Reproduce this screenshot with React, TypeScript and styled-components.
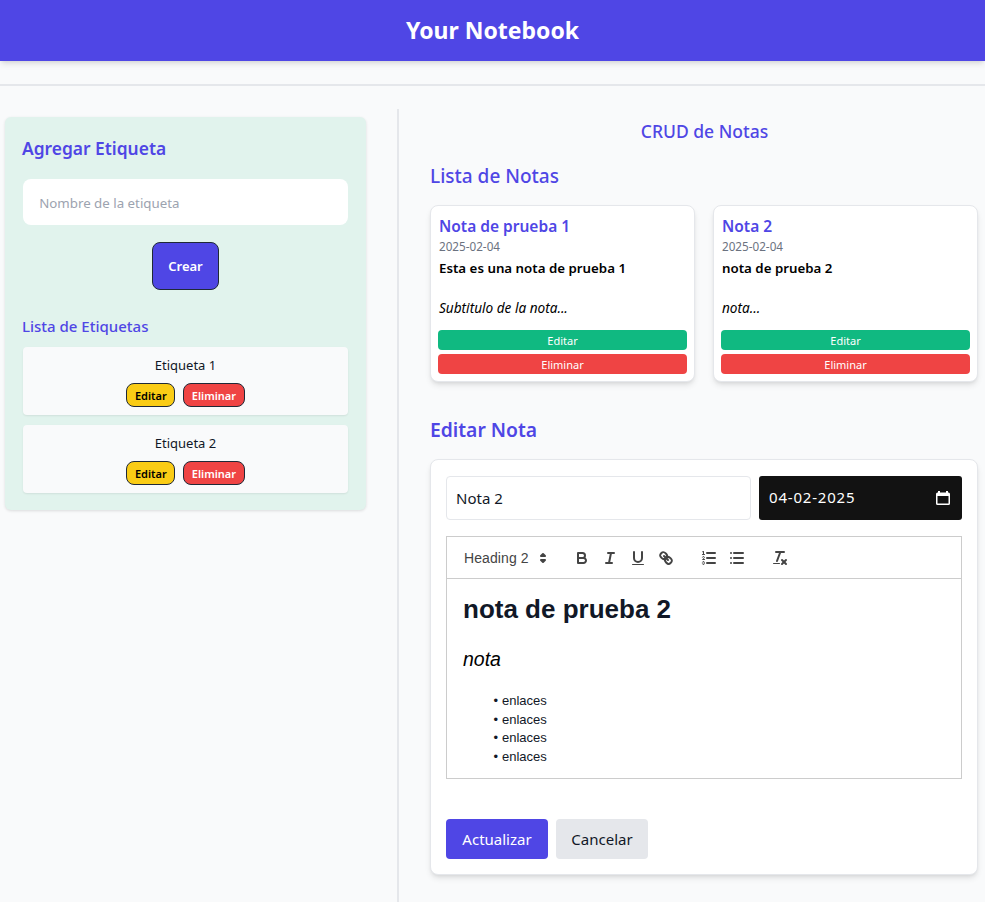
import React from 'react';
import styled, { createGlobalStyle } from 'styled-components';

const GlobalStyle = createGlobalStyle`
    * {
        box-sizing: border-box;
    }
    html, body {
        margin: 0;
        padding: 0;
        overflow: hidden;
    }
    body {
        background: #f9fafb;
        color: #111827;
        font-family: "Noto Sans", "Open Sans", sans-serif;
    }
`;

const tags = ['Etiqueta 1', 'Etiqueta 2'];

const notes = [
    { title: 'Nota de prueba 1', date: '2025-02-04', body: 'Esta es una nota de prueba 1', sub: 'Subtitulo de la nota...' },
    { title: 'Nota 2', date: '2025-02-04', body: 'nota de prueba 2', sub: 'nota...' },
];

const QuillIcon: React.FC<{ children: React.ReactNode }> = ({ children }) => (
    <ToolIcon viewBox="0 0 18 18">{children}</ToolIcon>
);

const App: React.FC = () => {
    return (
        <>
            <GlobalStyle />
            <Header>
                <Brand>Your Notebook</Brand>
            </Header>
            <Divider />
            <Main>
                <Aside>
                    <TagPanel>
                        <PanelTitle>Agregar Etiqueta</PanelTitle>
                        <TagInput placeholder="Nombre de la etiqueta" />
                        <CreateButton>Crear</CreateButton>
                        <TagListTitle>Lista de Etiquetas</TagListTitle>
                        <TagList>
                            {tags.map(tag => (
                                <TagItem key={tag}>
                                    <TagName>{tag}</TagName>
                                    <TagActions>
                                        <TagButton variant="edit">Editar</TagButton>
                                        <TagButton variant="delete">Eliminar</TagButton>
                                    </TagActions>
                                </TagItem>
                            ))}
                        </TagList>
                    </TagPanel>
                </Aside>
                <Content>
                    <PageTitle>CRUD de Notas</PageTitle>
                    <SectionTitle>Lista de Notas</SectionTitle>
                    <NoteGrid>
                        {notes.map(note => (
                            <NoteCard key={note.title}>
                                <NoteText>
                                    <NoteTitle>{note.title}</NoteTitle>
                                    <NoteDate>{note.date}</NoteDate>
                                    <NoteBody>{note.body}</NoteBody>
                                    <NoteSub>{note.sub}</NoteSub>
                                </NoteText>
                                <NoteButton variant="edit">Editar</NoteButton>
                                <NoteButton variant="delete">Eliminar</NoteButton>
                            </NoteCard>
                        ))}
                    </NoteGrid>
                    <EditTitle>Editar Nota</EditTitle>
                    <EditForm>
                        <FieldRow>
                            <TitleInput defaultValue="Nota 2" />
                            <DateField>
                                <DateText>04-02-2025</DateText>
                                <svg width="16" height="16" viewBox="0 0 16 16" fill="#fff">
                                    <path d="M3 1h2v1.5h6V1h2v1.5h.5A1.5 1.5 0 0 1 15 4v9.5a1.5 1.5 0 0 1-1.5 1.5h-11A1.5 1.5 0 0 1 1 13.5V4a1.5 1.5 0 0 1 1.5-1.5H3V1Zm-.5 5v7.5h11V6h-11Z" />
                                </svg>
                            </DateField>
                        </FieldRow>
                        <Toolbar>
                            <HeadingPicker>
                                Heading 2
                                <PickerArrows viewBox="0 0 18 18">
                                    <polygon points="7 11 9 13 11 11 7 11" />
                                    <polygon points="7 7 9 5 11 7 7 7" />
                                </PickerArrows>
                            </HeadingPicker>
                            <ToolGroup>
                                <QuillIcon>
                                    <path d="M5,4H9.5A2.5,2.5,0,0,1,12,6.5v0A2.5,2.5,0,0,1,9.5,9H5A0,0,0,0,1,5,9V4A0,0,0,0,1,5,4Z" />
                                    <path d="M5,9h5.5A2.5,2.5,0,0,1,13,11.5v0A2.5,2.5,0,0,1,10.5,14H5a0,0,0,0,1,0,0V9A0,0,0,0,1,5,9Z" />
                                </QuillIcon>
                                <QuillIcon>
                                    <line x1="7" x2="13" y1="4" y2="4" />
                                    <line x1="5" x2="11" y1="14" y2="14" />
                                    <line x1="8" x2="10" y1="14" y2="4" />
                                </QuillIcon>
                                <QuillIcon>
                                    <path d="M5,3V9a4.012,4.012,0,0,0,4,4H9a4.012,4.012,0,0,0,4-4V3" />
                                    <rect x="3" y="15" width="12" height="1" rx="0.5" ry="0.5" fill="#444" stroke="none" />
                                </QuillIcon>
                                <QuillIcon>
                                    <line x1="7" x2="11" y1="7" y2="11" />
                                    <path d="M8.9,4.577a3.476,3.476,0,0,1,.36,4.679A3.476,3.476,0,0,1,4.577,8.9C3.185,7.5,2.035,6.4,4.217,4.217S7.5,3.185,8.9,4.577Z" />
                                    <path d="M13.423,9.1a3.476,3.476,0,0,0-4.679-.36,3.476,3.476,0,0,0,.36,4.679c1.392,1.392,2.5,2.542,4.679.36S14.815,10.5,13.423,9.1Z" />
                                </QuillIcon>
                            </ToolGroup>
                            <ToolGroup>
                                <QuillIcon>
                                    <line x1="7" x2="15" y1="4" y2="4" />
                                    <line x1="7" x2="15" y1="9" y2="9" />
                                    <line x1="7" x2="15" y1="14" y2="14" />
                                    <line x1="2.5" x2="4.5" y1="5.5" y2="5.5" strokeWidth="1" />
                                    <path d="M3.5,6A0.5,0.5,0,0,1,3,5.5V3.085l-0.276.138A0.5,0.5,0,0,1,2.053,3c-0.124-.247-0.023-0.324.224-0.447l1-.5A0.5,0.5,0,0,1,4,2.5v3A0.5,0.5,0,0,1,3.5,6Z" fill="#444" stroke="none" />
                                    <path d="M4.5,10.5h-2c0-.234,1.85-1.076,1.85-2.234A0.959,0.959,0,0,0,2.5,8.156" strokeWidth="1" />
                                    <path d="M2.5,14.846a0.959,0.959,0,0,0,1.85-.109A0.7,0.7,0,0,0,3.75,14a0.688,0.688,0,0,0,.6-0.736,0.959,0.959,0,0,0-1.85-.109" strokeWidth="1" />
                                </QuillIcon>
                                <QuillIcon>
                                    <line x1="6" x2="15" y1="4" y2="4" />
                                    <line x1="6" x2="15" y1="9" y2="9" />
                                    <line x1="6" x2="15" y1="14" y2="14" />
                                    <line x1="3" x2="3" y1="4" y2="4" />
                                    <line x1="3" x2="3" y1="9" y2="9" />
                                    <line x1="3" x2="3" y1="14" y2="14" />
                                </QuillIcon>
                            </ToolGroup>
                            <ToolGroup>
                                <QuillIcon>
                                    <line x1="5" x2="13" y1="3" y2="3" />
                                    <line x1="6" x2="9.35" y1="12" y2="3" />
                                    <line x1="11" x2="15" y1="11" y2="15" />
                                    <line x1="15" x2="11" y1="11" y2="15" />
                                    <rect x="2" y="14" width="7" height="1" rx="0.5" ry="0.5" fill="#444" stroke="none" />
                                </QuillIcon>
                            </ToolGroup>
                        </Toolbar>
                        <Editor>
                            <EditorHeading>nota de prueba 2</EditorHeading>
                            <EditorSub>nota</EditorSub>
                            <EditorList>
                                <li>enlaces</li>
                                <li>enlaces</li>
                                <li>enlaces</li>
                                <li>enlaces</li>
                            </EditorList>
                        </Editor>
                        <FormActions>
                            <SubmitButton>Actualizar</SubmitButton>
                            <CancelButton>Cancelar</CancelButton>
                        </FormActions>
                    </EditForm>
                </Content>
            </Main>
        </>
    );
};

const Header = styled.header`
    height: 61px;
    padding-bottom: 2px;
    background: #4f46e5;
    display: flex;
    align-items: center;
    justify-content: center;
    box-shadow: 0 4px 6px -1px rgba(0, 0, 0, 0.1), 0 2px 4px -2px rgba(0, 0, 0, 0.1);
`;

const Brand = styled.h1`
    margin: 0;
    color: #fff;
    font-size: 23px;
    font-weight: 700;
`;

const Divider = styled.hr`
    margin: 23px 0 23px;
    border: 0;
    border-top: 2px solid #e5e7eb;
`;

const Main = styled.main`
    display: flex;
    align-items: flex-start;
`;

const Aside = styled.aside`
    flex: none;
    width: 399px;
    height: 793px;
    padding: 8px 31.33px 0 5.33px;
    border-right: 2px solid #e5e7eb;
`;

const TagPanel = styled.section`
    height: 393px;
    padding: 17px 17.33px;
    background: #e1f3ed;
    border-radius: 6px;
    box-shadow: 0 1px 3px rgba(0, 0, 0, 0.12);
    text-align: center;
`;

const PanelTitle = styled.h2`
    margin: 0 0 17px -0.7px;
    color: #4f46e5;
    font-size: 17.4px;
    line-height: 28px;
    font-weight: 600;
    text-align: left;
`;

const TagInput = styled.input`
    display: block;
    width: 100%;
    height: 46px;
    padding: 1px 16.5px 0;
    border: 0;
    border-radius: 8px;
    background: #fff;
    font: inherit;
    font-size: 13.3px;
    &::placeholder {
        color: #9ca3af;
        opacity: 1;
    }
`;

const CreateButton = styled.button`
    display: block;
    width: 67px;
    height: 48px;
    margin: 17px auto 0;
    padding: 0;
    border: 1px solid #1f2937;
    border-radius: 8px;
    background: #4f46e5;
    color: #fff;
    font: inherit;
    font-size: 13px;
    font-weight: 600;
`;

const TagListTitle = styled.h3`
    margin: 25px 0 10px -0.7px;
    color: #4f46e5;
    font-size: 15px;
    line-height: 22px;
    font-weight: 500;
    text-align: left;
`;

const TagList = styled.div`
    display: flex;
    flex-direction: column;
    gap: 10px;
`;

const TagItem = styled.div`
    height: 68px;
    padding-top: 8px;
    background: #f9fafb;
    border-radius: 4px;
    box-shadow: 0 1px 2px rgba(0, 0, 0, 0.08);
`;

const TagName = styled.div`
    font-size: 13px;
    line-height: 20px;
`;

const TagActions = styled.div`
    display: flex;
    justify-content: center;
    gap: 8px;
    margin-top: 8px;
`;

const TagButton = styled.button<{ variant: 'edit' | 'delete' }>`
    height: 24px;
    padding: 0 7.5px;
    border: 1px solid #1f2937;
    border-radius: 8px;
    background: ${props => (props.variant === 'edit' ? '#facc15' : '#ef4444')};
    color: ${props => (props.variant === 'edit' ? '#000' : '#fff')};
    font: inherit;
    font-size: 11px;
    font-weight: 600;
`;

const Content = styled.div`
    flex: none;
    width: 580px;
    padding: 8px 0 0 31px;
`;

const PageTitle = styled.h2`
    margin: 0;
    color: #4f46e5;
    font-size: 17.5px;
    line-height: 29px;
    font-weight: 500;
    text-align: center;
`;

const SectionTitle = styled.h2`
    margin: 15px 0 14px;
    color: #4f46e5;
    font-size: 19px;
    line-height: 30px;
    font-weight: 500;
`;

const NoteGrid = styled.div`
    display: grid;
    grid-template-columns: 265px 265px;
    gap: 18px;
`;

const NoteCard = styled.article`
    height: 177px;
    padding: 8px 7px;
    background: #fff;
    border: 1px solid #e5e7eb;
    border-radius: 8px;
    box-shadow: 0 4px 6px -1px rgba(0, 0, 0, 0.1), 0 2px 4px -2px rgba(0, 0, 0, 0.1);
`;

const NoteText = styled.div`
    padding-left: 1px;
`;

const NoteTitle = styled.h3`
    margin: 0;
    color: #4f46e5;
    font-size: 15.5px;
    line-height: 24px;
    font-weight: 600;
`;

const NoteDate = styled.div`
    color: #6b7280;
    font-size: 11.7px;
    line-height: 16px;
`;

const NoteBody = styled.div`
    margin-top: 4px;
    font-size: 13.3px;
    line-height: 20px;
    font-weight: 600;
    color: #000;
`;

const NoteSub = styled.div`
    margin: 20px 0 12px;
    font-size: 13.6px;
    line-height: 20px;
    font-style: italic;
    color: #000;
`;

const NoteButton = styled.button<{ variant: 'edit' | 'delete' }>`
    display: block;
    width: 100%;
    height: 20px;
    margin-bottom: 4px;
    padding: 0;
    border: 0;
    border-radius: 4px;
    background: ${props => (props.variant === 'edit' ? '#10b981' : '#ef4444')};
    color: #fff;
    font: inherit;
    font-size: 11px;
`;

const EditTitle = styled.h2`
    margin: 33px 0 14px;
    color: #4f46e5;
    font-size: 19.3px;
    line-height: 30px;
    font-weight: 600;
`;

const EditForm = styled.form`
    width: 548px;
    height: 416px;
    padding: 16px;
    background: #fff;
    border: 1px solid #e5e7eb;
    border-radius: 8px;
    box-shadow: 0 4px 6px -1px rgba(0, 0, 0, 0.1), 0 2px 4px -2px rgba(0, 0, 0, 0.1);
`;

const FieldRow = styled.div`
    display: flex;
    gap: 8px;
    margin: 0 -1px 16px;
`;

const TitleInput = styled.input`
    flex: none;
    width: 305px;
    height: 44px;
    padding: 0 9px;
    border: 1px solid #e5e7eb;
    border-radius: 4px;
    background: #fff;
    color: #111827;
    font: inherit;
    font-size: 15px;
`;

const DateField = styled.div`
    flex: none;
    width: 203px;
    height: 44px;
    display: flex;
    align-items: center;
    justify-content: space-between;
    padding: 0 11px 0 10px;
    border-radius: 3px;
    background: #121212;
    color: #fff;
`;

const DateText = styled.span`
    font-size: 15px;
    letter-spacing: 0.8px;
    line-height: 20px;
    margin-bottom: 2px;
`;

const Toolbar = styled.div`
    display: flex;
    align-items: center;
    height: 43px;
    margin: 0 -1px;
    padding: 0 8px;
    border: 1px solid #ccc;
    font-family: "Liberation Sans", Arial, sans-serif;
`;

const HeadingPicker = styled.div`
    flex: none;
    width: 98px;
    display: flex;
    align-items: center;
    justify-content: space-between;
    padding: 0 0 0 9px;
    color: #444;
    font-size: 14px;
    font-weight: 500;
    letter-spacing: 0.1px;
`;

const PickerArrows = styled.svg`
    width: 18px;
    height: 18px;
    margin-right: 1px;
    fill: #444;
    stroke: #444;
    stroke-width: 2;
    stroke-linejoin: round;
`;

const ToolGroup = styled.div`
    display: flex;
    margin-left: 15px;
`;

const ToolIcon = styled.svg`
    width: 28px;
    height: 24px;
    padding: 3px 5px;
    fill: none;
    stroke: #444;
    stroke-width: 2;
    stroke-linecap: round;
    stroke-linejoin: round;
`;

const Editor = styled.div`
    height: 200px;
    margin: 0 -1px;
    padding: 12px 16px;
    border: 1px solid #ccc;
    border-top: 0;
    font-family: "Liberation Sans", Arial, sans-serif;
    font-size: 13px;
    line-height: 1.42;
`;

const EditorHeading = styled.h2`
    margin: 0;
    font-size: 26px;
    line-height: 37px;
    font-weight: 700;
`;

const EditorSub = styled.p`
    margin: 17px 0 19.4px;
    font-size: 19.5px;
    line-height: 28px;
    font-style: italic;
    color: #000;
`;

const EditorList = styled.ul`
    margin: 0;
    padding: 0 0 0 1.5em;
    list-style: none;
    li {
        padding-left: 1.5em;
    }
    li::before {
        content: '\\2022';
        display: inline-block;
        width: 1.2em;
        margin-left: -1.5em;
        margin-right: 0.3em;
        text-align: right;
    }
`;

const FormActions = styled.div`
    display: flex;
    gap: 8px;
    margin: 40px -1px 0;
`;

const SubmitButton = styled.button`
    width: 102px;
    height: 40px;
    padding: 0;
    border: 0;
    border-radius: 4px;
    background: #4f46e5;
    color: #fff;
    font: inherit;
    font-size: 15px;
`;

const CancelButton = styled.button`
    width: 92px;
    height: 40px;
    padding: 0;
    border: 0;
    border-radius: 4px;
    background: #e5e7eb;
    color: #111827;
    font: inherit;
    font-size: 15px;
`;

export default App;
